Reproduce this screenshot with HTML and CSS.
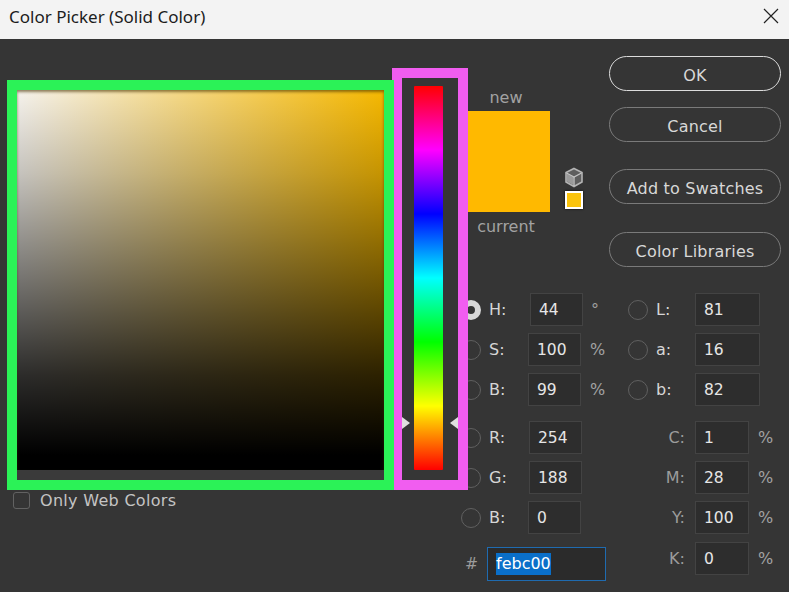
FILE: index.html
```html
<!DOCTYPE html>
<html lang="en">
<head>
<meta charset="utf-8">
<title>Color Picker (Solid Color)</title>
<link rel="stylesheet" href="styles.css">
</head>
<body>
<div class="window">
  <header class="titlebar">
    <span class="title">Color Picker (Solid Color)</span>
    <svg class="close" width="16" height="16" viewBox="0 0 16 16"><path d="M1 1L15 15M15 1L1 15" stroke="#222" stroke-width="1.2" fill="none"/></svg>
  </header>
  <main class="dialog">
    <section class="left">
      <div class="sv-frame"><div class="sv"></div></div>
      <label class="web"><span class="check"></span><span>Only Web Colors</span></label>
    </section>
    <section class="hue-frame">
      <div class="hue"></div>
      <span class="arrow arrow-l"></span>
      <span class="arrow arrow-r"></span>
    </section>
    <section class="right">
      <div class="top">
        <div class="preview">
          <div class="cap">new</div>
          <div class="swatch"></div>
          <div class="cap cap-current">current</div>
        </div>
        <div class="gamut">
          <svg width="20" height="21" viewBox="0 0 20 21">
            <path d="M10 1.5L18 5.5V15L10 19.5L2 15V5.5Z" fill="#5e5e5e" stroke="#b4b4b4" stroke-width="1.6"/>
            <path d="M3 6.8L9.2 10.2V18L3 14.6Z" fill="#9a9a9a"/>
            <path d="M2.5 6L10 10L17.5 6" fill="none" stroke="#c4c4c4" stroke-width="1.3"/>
            <path d="M10 10V19" fill="none" stroke="#c4c4c4" stroke-width="1.3"/>
          </svg>
          <span class="mini"></span>
        </div>
        <div class="buttons">
          <button class="btn btn-ok">OK</button>
          <button class="btn btn-cancel">Cancel</button>
          <button class="btn btn-add">Add to Swatches</button>
          <button class="btn btn-lib">Color Libraries</button>
        </div>
      </div>
      <div class="fields">
        <div class="col col-a">
          <div class="row"><span class="radio on"></span><span class="lab">H:</span><span class="inp n2 w53">44</span><span class="unit deg">°</span></div>
          <div class="row"><span class="radio"></span><span class="lab">S:</span><span class="inp w53">100</span><span class="unit">%</span></div>
          <div class="row"><span class="radio"></span><span class="lab">B:</span><span class="inp w53">99</span><span class="unit">%</span></div>
          <div class="row group"><span class="radio"></span><span class="lab">R:</span><span class="inp n1 w53">254</span></div>
          <div class="row"><span class="radio"></span><span class="lab">G:</span><span class="inp n1 w53">188</span></div>
          <div class="row"><span class="radio"></span><span class="lab">B:</span><span class="inp w53">0</span></div>
          <div class="hex"><span class="hash">#</span><span class="hexval"><span class="sel">febc00</span></span></div>
        </div>
        <div class="col col-b">
          <div class="row"><span class="radio"></span><span class="lab">L:</span><span class="inp w65">81</span></div>
          <div class="row"><span class="radio"></span><span class="lab">a:</span><span class="inp w65">16</span></div>
          <div class="row"><span class="radio"></span><span class="lab">b:</span><span class="inp w65">82</span></div>
          <div class="row group"><span></span><span class="lab dim">C:</span><span class="inp w54">1</span><span class="unit">%</span></div>
          <div class="row"><span></span><span class="lab dim">M:</span><span class="inp w54">28</span><span class="unit">%</span></div>
          <div class="row"><span></span><span class="lab dim">Y:</span><span class="inp w54">100</span><span class="unit">%</span></div>
          <div class="row row-k"><span></span><span class="lab dim">K:</span><span class="inp w54">0</span><span class="unit">%</span></div>
        </div>
      </div>
    </section>
  </main>
</div>
</body>
</html>
```
FILE: styles.css
```css
* { box-sizing: border-box; }
html, body { margin: 0; padding: 0; }
body { width: 789px; height: 592px; overflow: hidden; background: #353535; font-family: "DejaVu Sans", sans-serif; font-size: 15.5px; color: #d6d6d6; }
.window { display: flex; flex-direction: column; width: 789px; height: 592px; }
.titlebar { flex: none; height: 39px; background: #f3f3f3; display: flex; align-items: center; justify-content: space-between; padding: 0 9px 7px 9px; }
.title { font-family: "Noto Sans", sans-serif; font-size: 17px; color: #1c1c1c; }
.close { margin-right: 1px; }
.dialog { flex: 1; display: flex; align-items: flex-start; background: #353535; }
.left { position: relative; z-index: 2; margin: 41px 0 0 7px; width: 387px; flex: none; }
.sv-frame { width: 387px; height: 410px; border: 10px solid #2bf257; background: #3a3a3a; }
.sv { height: 380px; background: linear-gradient(to top, #000 4%, rgba(0,0,0,0.82) 25%, rgba(0,0,0,0.5) 52%, rgba(0,0,0,0.2) 78%, rgba(0,0,0,0) 100%), linear-gradient(to right, #f6f3ee, #f6b800); box-shadow: inset 0 2px 3px rgba(70,50,0,0.6); }
.web { display: flex; align-items: center; gap: 10px; margin: 2px 0 0 6px; height: 16px; color: #c4c4c4; font-size: 16px; letter-spacing: 0.3px; }
.check { width: 17px; height: 17px; border: 1px solid #626262; border-radius: 3px; }
.hue-frame { position: relative; z-index: 1; flex: none; margin: 29px 0 0 -2px; width: 76px; height: 422px; border: 10px solid #f15df0; background: #363636; }
.hue { margin: 8px 0 0 12px; width: 29px; height: 384px; border-radius: 1px; background: linear-gradient(to bottom, #f00 0%, #f0f 16.67%, #00f 33.33%, #0ff 50%, #0f0 66.67%, #ff0 83.33%, #f00 100%); }
.arrow { position: absolute; top: 339px; width: 0; height: 0; border-top: 6px solid transparent; border-bottom: 6px solid transparent; }
.arrow-l { left: 0; border-left: 8px solid #e0e0e0; }
.arrow-r { right: 0; border-right: 8px solid #e0e0e0; }
.right { flex: none; width: 321px; display: flex; flex-direction: column; }
.top { height: 254px; display: flex; align-items: flex-start; }
.preview { width: 82px; padding-top: 49px; flex: none; }
.cap { height: 20px; line-height: 20px; text-align: center; color: #a2a2a2; font-size: 16px; padding-right: 6px; }
.swatch { height: 101px; margin: 3px 0 5px; background: #ffb900; }
.gamut { flex: none; margin: 128px 0 0 14px; width: 20px; display: flex; flex-direction: column; align-items: center; gap: 3px; }
.mini { width: 18px; height: 18px; background: #fbc40c; border: 2px solid #fff; box-shadow: 0 0 2px #000; }
.buttons { flex: none; margin: 17px 0 0 25px; display: flex; flex-direction: column; }
.btn { width: 172px; height: 35px; border-radius: 18px; background: transparent; border: 1px solid #7a7a7a; color: #d8d8d8; font-family: "DejaVu Sans", sans-serif; font-size: 16px; letter-spacing: 0.2px; padding: 3px 0 0; }
.btn-ok { border: 1.5px solid #dcdcdc; }
.btn-cancel { margin-top: 16px; }
.btn-add { margin-top: 27px; }
.btn-lib { margin-top: 28px; }
.fields { display: flex; margin-left: -7px; }
.col { display: flex; flex-direction: column; gap: 7px; flex: none; }
.col-a { width: 167px; }
.row { display: grid; grid-template-columns: 20px 47px auto auto; align-items: center; height: 33px; justify-content: start; }
.group { margin-top: 8px; }
.row-k { margin-top: 1px; }
.radio { width: 20px; height: 20px; border-radius: 50%; border: 1px solid #606060; }
.radio.on { border: 6px solid #d8d8d8; background: #353535; }
.lab { padding-left: 8px; color: #d6d6d6; font-size: 16px; }
.lab.dim { padding: 0 10px 0 0; text-align: right; color: #9c9c9c; }
.inp { display: block; height: 33px; line-height: 32px; padding-left: 8px; background: #2d2d2d; border: 1px solid #434343; color: #e6e6e6; }
.w53 { width: 53px; }
.w54 { width: 54px; }
.w65 { width: 65px; }
.n1 { margin-left: 1px; }
.n2 { margin-left: 2px; }
.unit { margin-left: 9px; color: #a2a2a2; font-size: 16px; }
.deg { margin-left: 8px; }
.hex { display: flex; align-items: center; margin-top: 6px; height: 34px; padding-left: 4px; }
.hash { width: 22px; color: #9c9c9c; font-style: italic; }
.hexval { width: 119px; height: 34px; line-height: 32px; padding-left: 8px; background: #2b2b2b; border: 1px solid #1f6bb0; color: #fff; font-size: 16px; }
.sel { display: inline-block; height: 22px; line-height: 22px; background: #0a6fc9; }
```
